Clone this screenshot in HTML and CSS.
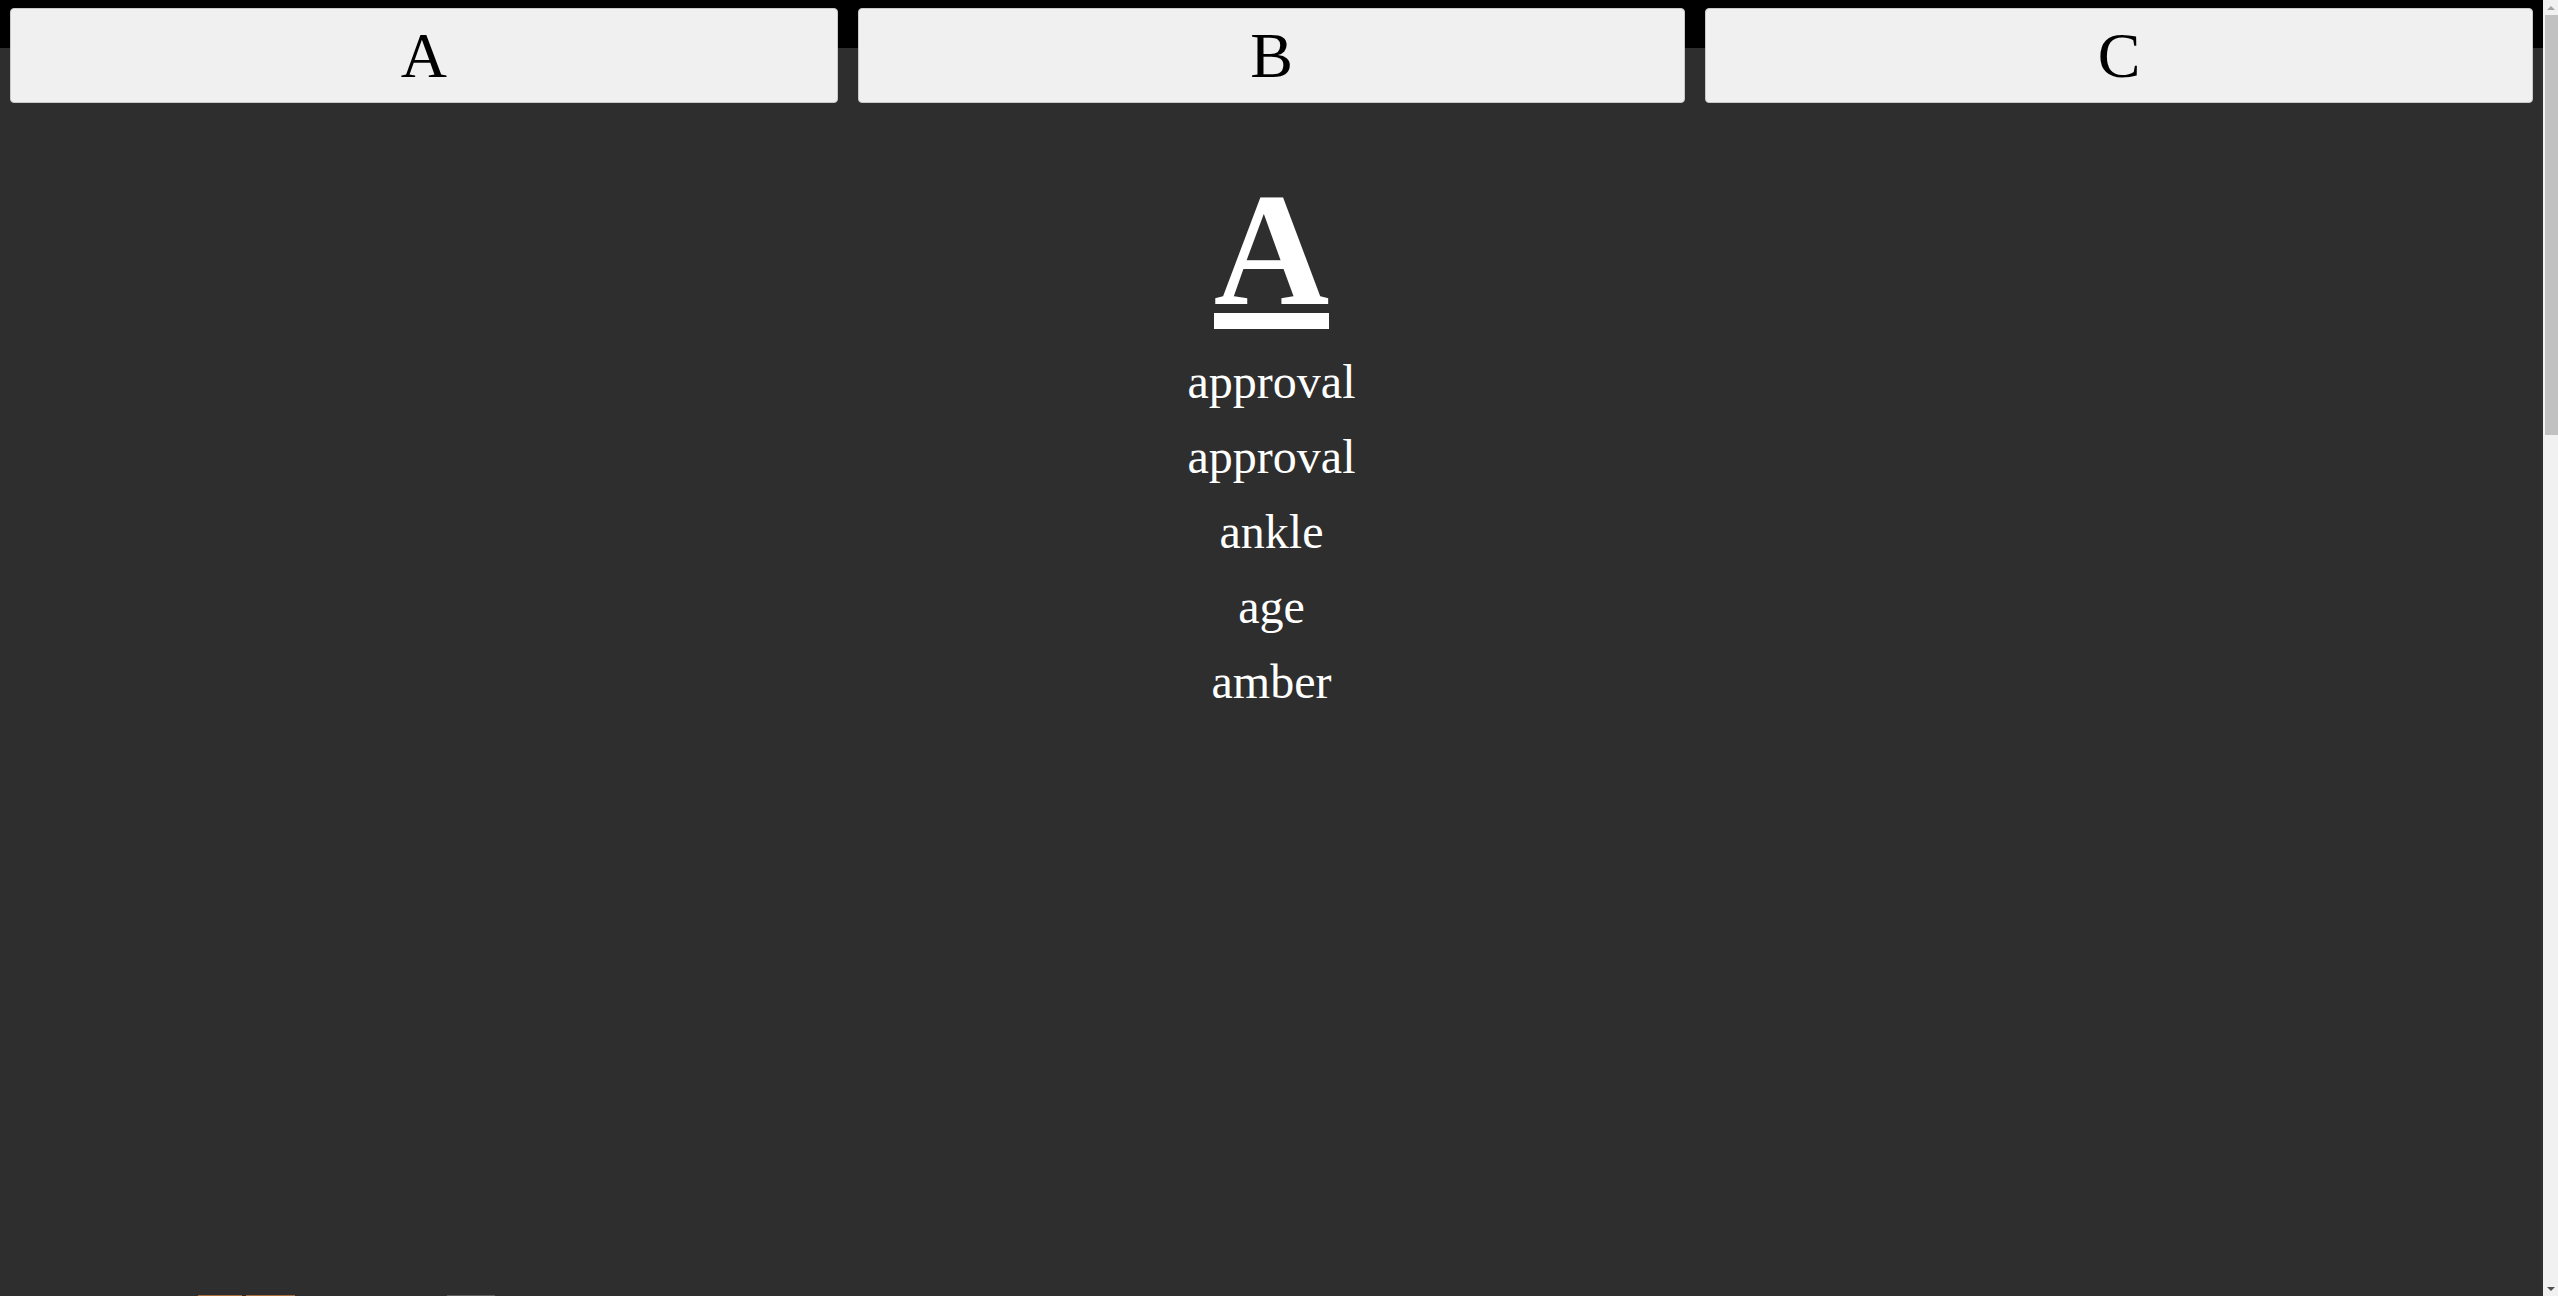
FILE: index.html
```html
<!DOCTYPE html>
<html lang="en">
<head>
<meta charset="utf-8">
<title>Letters</title>
<link rel="stylesheet" href="styles.css">
</head>
<body>
<div class="page">
  <nav class="tabs">
    <button class="tab">A</button>
    <button class="tab">B</button>
    <button class="tab">C</button>
  </nav>
  <main class="content">
    <h1 class="letter">A</h1>
    <ul class="words">
      <li>approval</li>
      <li>approval</li>
      <li>ankle</li>
      <li>age</li>
      <li>amber</li>
    </ul>
    <section class="gallery">
      <div class="thumb thumb-orange"></div>
      <div class="thumb thumb-orange thumb-wide"></div>
      <div class="thumb thumb-grey"></div>
    </section>
  </main>
</div>
<div class="scrollbar" aria-hidden="true">
  <div class="sb-arrow sb-up"></div>
  <div class="sb-track">
    <div class="sb-thumb"></div>
  </div>
  <div class="sb-arrow sb-down"></div>
</div>
</body>
</html>
```
FILE: styles.css
```css
html, body {
  margin: 0;
  padding: 0;
}

body {
  display: flex;
  align-items: flex-start;
  background: #2e2e2e;
  font-family: "Liberation Serif", "Times New Roman", serif;
}

.page {
  flex: 1 1 auto;
  min-width: 0;
}

.tabs {
  display: flex;
  gap: 20px;
  padding: 8px 10px 0 10px;
  background: linear-gradient(#000 0, #000 48px, transparent 48px);
}

.tab {
  flex: 1 1 0;
  height: 95px;
  margin: 0;
  padding: 0;
  background: #f0f0f0;
  border: 1px solid #c9c9c9;
  border-radius: 4px;
  color: #000;
  font-family: "Liberation Serif", "Times New Roman", serif;
  font-size: 64px;
  font-weight: normal;
}

.content {
  display: flex;
  flex-direction: column;
  align-items: center;
}

.letter {
  margin: 84px 0 0 0;
  color: #fff;
  font-size: 160px;
  font-weight: bold;
  line-height: 126px;
  border-bottom: 16px solid #fff;
}

.words {
  list-style: none;
  margin: 15px 0 0 0;
  padding: 0;
  text-align: center;
  color: #fff;
  font-size: 48px;
  line-height: 75px;
}

.gallery {
  align-self: stretch;
  display: flex;
  align-items: flex-start;
  gap: 4px;
  margin-top: 576px;
  padding-left: 198px;
  height: 2611px;
}

.thumb {
  width: 44px;
  height: 240px;
}

.thumb-wide {
  width: 49px;
}

.thumb-orange {
  background: #a86d3c;
}

.thumb-grey {
  width: 48px;
  margin-left: 148px;
  background: #5e5e5e;
}

/* classic scrollbar drawn beside the page */
.scrollbar {
  position: sticky;
  top: 0;
  flex: 0 0 15px;
  width: 15px;
  height: 100vh;
  display: flex;
  flex-direction: column;
  background: #f1f1f1;
}

.sb-arrow {
  flex: 0 0 15px;
  display: flex;
  align-items: center;
  justify-content: center;
}

.sb-up::before,
.sb-down::before {
  content: "";
  width: 0;
  height: 0;
  border-left: 4px solid transparent;
  border-right: 4px solid transparent;
}

.sb-up::before {
  border-bottom: 4px solid #a3a3a3;
}

.sb-down::before {
  border-top: 4px solid #505050;
}

.sb-track {
  flex: 1 1 auto;
}

.sb-thumb {
  height: 420px;
  margin: 0 0 0 2px;
  background: #c1c1c1;
}
```
